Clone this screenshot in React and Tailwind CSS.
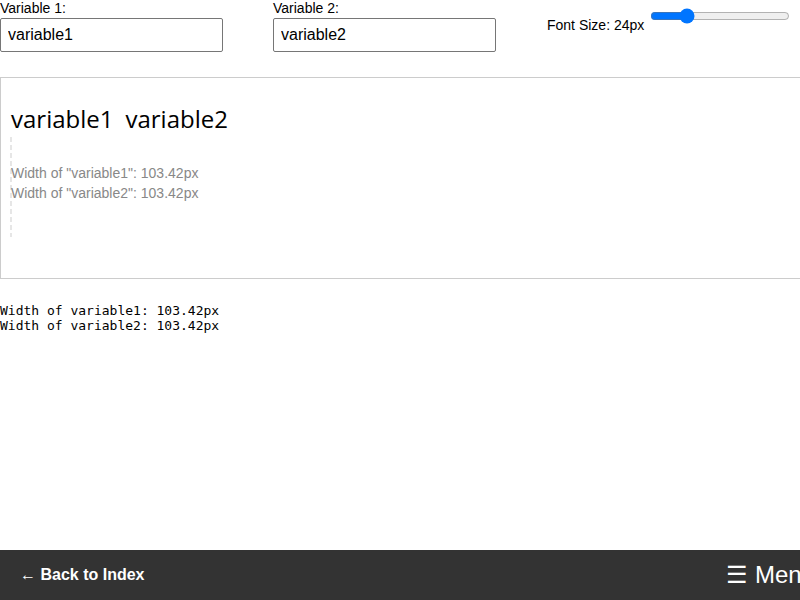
import { useState } from 'react';

// widths of "variable1" / "variable2" at 24px, taken from a canvas measure
const measured = {
  variable1: '103.42',
  variable2: '103.42',
};

const VariableInput = ({ label, value, onChange }) => {
  return (
    <div>
      <label className="block text-[14px] leading-[16px] mb-[2px]">{label}</label>
      <input
        type="text"
        value={value}
        onChange={(e) => onChange(e.target.value)}
        className="w-[223px] h-[34px] px-[7px] text-[16px] border border-[#767676] rounded-[2px] outline-none"
      />
    </div>
  );
};

const App = () => {
  const [var1, setVar1] = useState('variable1');
  const [var2, setVar2] = useState('variable2');
  const [fontSize, setFontSize] = useState(24);

  return (
    <div className="font-['Liberation_Sans',Arial,sans-serif] text-black min-h-[600px] bg-white">
      {/* controls */}
      <div className="flex gap-[50px]">
        <VariableInput label="Variable 1:" value={var1} onChange={setVar1} />
        <VariableInput label="Variable 2:" value={var2} onChange={setVar2} />
        <div className="flex items-start ml-[1px]">
          <span className="mt-[17px] text-[14px] leading-[16px]">Font Size: {fontSize}px</span>
          <input
            type="range"
            min={10}
            max={70}
            value={fontSize}
            onChange={(e) => setFontSize(Number(e.target.value))}
            className="mt-[8px] ml-[6px] m-0 w-[140px] h-4"
          />
        </div>
      </div>

      {/* preview box */}
      <div className="mt-[25px] w-full box-content h-[180px] p-[10px] border border-[#ccc]">
        <div
          className="mt-[14px] flex gap-[12px] font-['Open_Sans',sans-serif] leading-[33px]"
          style={{ fontSize: `${fontSize}px` }}
        >
          <span>{var1}</span>
          <span>{var2}</span>
        </div>
        <div className="relative mt-[2px] h-[100px] pt-[26px] text-[14px] leading-[20px] text-[#888]">
          {/* baseline guide */}
          <div className="absolute left-[-1px] top-0 w-[2px] h-full bg-[repeating-linear-gradient(to_bottom,#e6e6e6_0_5px,transparent_5px_8px)]" />
          <div className="relative">Width of "{var1}": {measured.variable1}px</div>
          <div className="relative">Width of "{var2}": {measured.variable2}px</div>
        </div>
      </div>

      <pre className="mt-[24px] font-['DejaVu_Sans_Mono',monospace] text-[13px] leading-[15px]">
        {`Width of ${var1}: ${measured.variable1}px\nWidth of ${var2}: ${measured.variable2}px`}
      </pre>

      {/* bottom nav */}
      <div className="fixed bottom-0 left-0 w-full box-content px-5 h-[50px] bg-[#333] text-white flex items-center justify-between">
        <a href="#" className="font-bold text-[16px]">
          ← Back to Index
        </a>
        <button className="mr-[5px] text-[24px] leading-none">☰ Menu</button>
      </div>
    </div>
  );
};

export default App;
